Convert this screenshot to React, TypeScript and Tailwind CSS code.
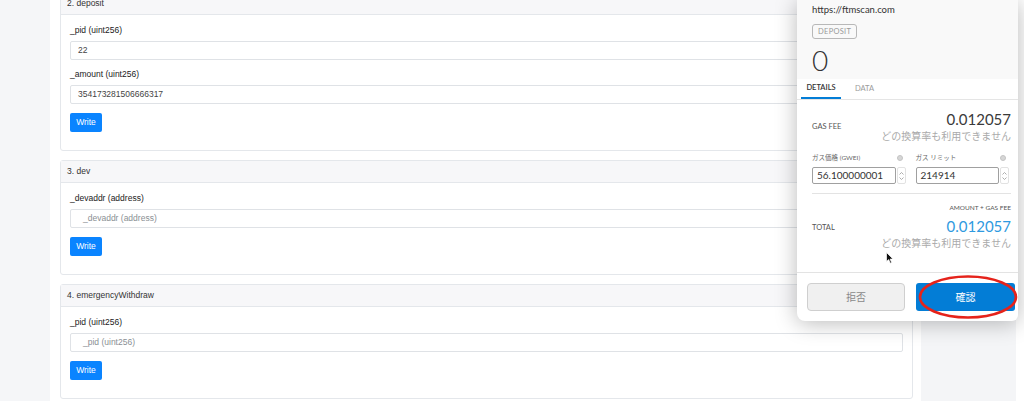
import React from 'react'

const sans = { fontFamily: '"Liberation Sans", Arial, sans-serif' }

type Field = { label: string; value?: string; placeholder?: string }

const sections: { title: string; fields: Field[] }[] = [
  {
    title: '2. deposit',
    fields: [
      { label: '_pid (uint256)', value: '22' },
      { label: '_amount (uint256)', value: '354173281506666317' },
    ],
  },
  { title: '3. dev', fields: [{ label: '_devaddr (address)', placeholder: '_devaddr (address)' }] },
  { title: '4. emergencyWithdraw', fields: [{ label: '_pid (uint256)', placeholder: '_pid (uint256)' }] },
]

function Card({ title, fields }: { title: string; fields: Field[] }) {
  return (
    <div className="border border-[#e4e7eb] rounded-[3px] bg-white">
      <div className="h-[22px] bg-[#f7f7f9] border-b border-[#e4e7eb] px-[6px] flex items-center text-[8.5px] text-[#333]">
        {title}
      </div>
      <div className="px-[9px] pt-[10px] pb-[18px]">
        {fields.map((f, i) => (
          <div key={i} className={i > 0 ? 'mt-[9px]' : ''}>
            <div className="text-[8.5px] leading-[11px] text-[#222]">{f.label}</div>
            <div
              className={`mt-[5px] h-[19px] border border-[#dfe2e6] rounded-[2px] flex items-center text-[8.5px] ${
                f.value ? 'pl-[7px] text-[#444]' : 'pl-[12px] text-[#8a8f94]'
              }`}
            >
              {f.value ?? f.placeholder}
            </div>
          </div>
        ))}
        <button className="mt-[9px] h-[19px] w-[32px] bg-[#0a84ff] rounded-[2px] text-white text-[8.5px] flex items-center justify-center">
          Write
        </button>
      </div>
    </div>
  )
}

function InfoDot() {
  return <span className="w-[6px] h-[6px] rounded-full bg-[#d6d6d6] border border-[#c4c4c4]" />
}

function Spinner() {
  return (
    <div className="w-[9px] h-full border border-[#e2e2e2] rounded-[2px] flex flex-col items-center justify-center gap-[2px]">
      <svg width="5" height="3" viewBox="0 0 5 3">
        <path d="M0.5 2.5 L2.5 0.5 L4.5 2.5" fill="none" stroke="#999" strokeWidth="0.8" />
      </svg>
      <svg width="5" height="3" viewBox="0 0 5 3">
        <path d="M0.5 0.5 L2.5 2.5 L4.5 0.5" fill="none" stroke="#999" strokeWidth="0.8" />
      </svg>
    </div>
  )
}

function GasInput({ label, value }: { label: string; value: string }) {
  return (
    <div>
      <div className="flex items-center justify-between h-[9px] pr-[3px]">
        <span className="text-[6.5px] leading-[9px] text-[#666]">{label}</span>
        <InfoDot />
      </div>
      <div className="mt-[5px] h-[17px] flex gap-[1px]">
        <div className="flex-1 border border-[#a0a0a0] rounded-[2px] flex items-center pl-[4px] text-[10px] text-[#333]">
          {value}
        </div>
        <Spinner />
      </div>
    </div>
  )
}

function Popup() {
  const ff = { fontFamily: 'Lato, "Noto Sans CJK JP", sans-serif' }
  return (
    <div
      style={ff}
      className="absolute top-0 left-[797px] w-[221px] h-[321px] bg-white rounded-bl-[8px] rounded-br-[6px] shadow-[0_2px_22px_rgba(0,0,0,0.28)] flex flex-col"
    >
      <div className="h-[79px] bg-[#f9f9f9] px-[15px] pt-[4px]">
        <div className="text-[9.5px] leading-[12px] text-[#333]">https://ftmscan.com</div>
        <div className="mt-[6px] inline-flex h-[15px] items-center px-[5px] border border-[#b8b8b8] rounded-[3px] text-[7.5px] text-[#999] tracking-[0.3px]">
          DEPOSIT
        </div>
        <div className="mt-[5px] text-[28px] leading-[30px] font-light text-[#333]">0</div>
      </div>
      <div className="h-[21px] border-b border-[#e5e5e5] flex px-[4px]">
        <div className="w-[40px] flex items-center justify-center text-[7.5px] font-semibold text-[#333] border-b-2 border-[#037dd6]">
          DETAILS
        </div>
        <div className="ml-[14px] flex items-center text-[7.5px] text-[#9b9b9b]">DATA</div>
      </div>
      <div className="pl-[15px] pr-[7px]">
        <div className="pt-[11px] flex items-center justify-between">
          <span className="text-[7.5px] text-[#555]">GAS FEE</span>
          <div className="text-right">
            <div className="text-[15px] leading-[17px] text-[#3a3a3a]">0.012057</div>
            <div className="mt-[1px] text-[10px] leading-[14px] text-[#aaa]">どの換算率も利用できません</div>
          </div>
        </div>
        <div className="mt-[10px] grid grid-cols-2 gap-[10px] pr-[2px]">
          <GasInput label="ガス価格 (GWEI)" value="56.100000001" />
          <GasInput label="ガス リミット" value="214914" />
        </div>
        <div className="mt-[9px] border-t border-[#e3e3e3]" />
        <div className="mt-[9px] text-right text-[6.5px] leading-[9px] text-[#555]">AMOUNT + GAS FEE</div>
        <div className="mt-[6px] flex items-start justify-between">
          <span className="text-[7.5px] leading-[19px] text-[#555]">TOTAL</span>
          <div className="text-right">
            <div className="text-[15px] leading-[17px] text-[#2f9ae0]">0.012057</div>
            <div className="mt-[1px] text-[10px] leading-[14px] text-[#aaa]">どの換算率も利用できません</div>
          </div>
        </div>
      </div>
      <div className="mt-auto h-[49px] border-t border-[#e3e3e3] pl-[10px] pr-[2px] pt-[10px] flex gap-[11px]">
        <button className="w-[98px] h-[28px] bg-[#f0f0f0] border border-[#cfcfcf] rounded-[4px] text-[10px] text-[#8a8a8a]">
          拒否
        </button>
        <button className="w-[99px] h-[28px] bg-[#037dd6] rounded-[3px] text-[10px] text-white">確認</button>
      </div>
      {/* red annotation ring */}
      <svg className="absolute left-[121px] top-[275px]" width="100" height="44" viewBox="0 0 100 44">
        <ellipse cx="50" cy="22" rx="48" ry="20.5" fill="none" stroke="#e5231b" strokeWidth="2.6" />
      </svg>
      {/* mouse cursor */}
      <svg className="absolute left-[89px] top-[252px]" width="8" height="12" viewBox="0 0 8 12">
        <path d="M0.5 0.5 L0.5 9.5 L2.7 7.6 L4.3 11.2 L5.6 10.6 L4.1 7.1 L7 7 Z" fill="#111" stroke="#fff" strokeWidth="0.7" />
      </svg>
    </div>
  )
}

export default function App() {
  return (
    <div style={sans} className="relative w-[1024px] h-[401px] overflow-hidden bg-white flex">
      <div className="w-[50px] h-full shrink-0 bg-[#f5f6f8]" />
      <div className="ml-[10px] w-[853px] shrink-0 -mt-[8px] flex flex-col gap-[9px]">
        {sections.map((s) => (
          <Card key={s.title} title={s.title} fields={s.fields} />
        ))}
      </div>
      <div className="ml-[8px] w-[95px] h-full shrink-0 bg-[#f4f5f7]" />
      <Popup />
    </div>
  )
}
